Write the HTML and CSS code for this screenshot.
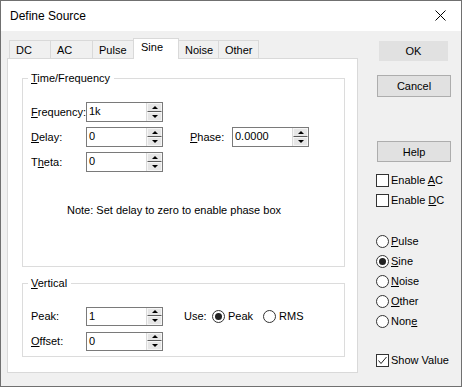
FILE: index.html
```html
<!DOCTYPE html>
<html lang="en">
<head>
  <meta charset="UTF-8" />
  <title>Define Source</title>
  <link rel="stylesheet" href="styles.css">
</head>
<body>
  <div class="window">
    <div class="titlebar">
      <span class="title">Define Source</span>
      <svg class="close" width="11" height="11" viewBox="0 0 11 11">
        <path d="M0.5 0.5 L10.5 10.5 M10.5 0.5 L0.5 10.5" stroke="#000" stroke-width="1" fill="none"/>
      </svg>
    </div>
    <div class="dialog">
      <div class="left">
        <div class="tabs">
          <div class="tab" style="width:42px">DC</div>
          <div class="tab" style="width:43px">AC</div>
          <div class="tab" style="width:42px">Pulse</div>
          <div class="tab selected" style="width:46px">Sine</div>
          <div class="tab" style="width:41px">Noise</div>
          <div class="tab" style="width:41px">Other</div>
        </div>
        <div class="panel">
          <fieldset class="group timefreq">
            <legend><u>T</u>ime/Frequency</legend>
            <div class="rows">
              <div class="row">
                <label class="lbl"><u>F</u>requency:</label>
                <div class="spin"><span class="val">1k</span><div class="arrows"><i class="up"></i><i class="down"></i></div></div>
              </div>
              <div class="row">
                <label class="lbl"><u>D</u>elay:</label>
                <div class="spin"><span class="val">0</span><div class="arrows"><i class="up"></i><i class="down"></i></div></div>
                <label class="lbl phase-lbl"><u>P</u>hase:</label>
                <div class="spin"><span class="val">0.0000</span><div class="arrows"><i class="up"></i><i class="down"></i></div></div>
              </div>
              <div class="row">
                <label class="lbl">T<u>h</u>eta:</label>
                <div class="spin"><span class="val">0</span><div class="arrows"><i class="up"></i><i class="down"></i></div></div>
              </div>
            </div>
            <p class="note">Note: Set delay to zero to enable phase box</p>
          </fieldset>
          <fieldset class="group vertical">
            <legend><u>V</u>ertical</legend>
            <div class="rows">
              <div class="row">
                <label class="lbl">Peak:</label>
                <div class="spin"><span class="val">1</span><div class="arrows"><i class="up"></i><i class="down"></i></div></div>
                <span class="use-lbl">Use:</span>
                <span class="opt"><i class="radio on"></i><span>Peak</span></span>
                <span class="opt rms"><i class="radio"></i><span>RMS</span></span>
              </div>
              <div class="row">
                <label class="lbl"><u>O</u>ffset:</label>
                <div class="spin"><span class="val">0</span><div class="arrows"><i class="up"></i><i class="down"></i></div></div>
              </div>
            </div>
          </fieldset>
        </div>
      </div>
      <div class="side">
        <button class="btn ok">OK</button>
        <button class="btn cancel">Cancel</button>
        <button class="btn help">Help</button>
        <div class="check first"><i class="box"></i><span>Enable <u>A</u>C</span></div>
        <div class="check"><i class="box"></i><span>Enable <u>D</u>C</span></div>
        <div class="check radios-start"><i class="radio"></i><span><u>P</u>ulse</span></div>
        <div class="check"><i class="radio on"></i><span><u>S</u>ine</span></div>
        <div class="check"><i class="radio"></i><span><u>N</u>oise</span></div>
        <div class="check"><i class="radio"></i><span><u>O</u>ther</span></div>
        <div class="check"><i class="radio"></i><span>Non<u>e</u></span></div>
        <div class="check show"><i class="box">
          <svg width="11" height="11" viewBox="0 0 11 11"><path d="M1.5 5.5 L4 8.5 L9.5 2" stroke="#222" stroke-width="1" fill="none"/></svg>
        </i><span>Show Value</span></div>
      </div>
    </div>
  </div>
</body>
</html>
```

FILE: styles.css
```css
* {
  box-sizing: border-box;
}

body {
  margin: 0;
  font-family: "Liberation Sans", Arial, sans-serif;
  font-size: 11px;
  color: #000;
  background: #fff;
}

u {
  text-decoration: underline;
  text-underline-offset: 1px;
}

.window {
  width: 462px;
  height: 387px;
  border: 1px solid #707070;
  background: #f0f0f0;
  display: flex;
  flex-direction: column;
}

.titlebar {
  height: 30px;
  background: #fff;
  display: flex;
  align-items: center;
  justify-content: space-between;
  padding: 0 10px 1px 9px;
}

.title {
  font-size: 12px;
}

.close {
  margin-right: 5px;
}

.dialog {
  flex: 1;
  display: flex;
}

.left {
  width: 351px;
  margin-left: 6px;
  padding-top: 7px;
}

.tabs {
  height: 20px;
  display: flex;
  align-items: flex-end;
  padding-left: 2px;
}

.tab {
  height: 18px;
  border: 1px solid #d9d9d9;
  border-bottom: none;
  margin-left: -1px;
  padding: 2px 0 0 6px;
  line-height: 14px;
  background: #f0f0f0;
}

.tab:first-child {
  margin-left: 0;
}

.tab.selected {
  height: 21px;
  margin-bottom: -1px;
  padding: 1px 0 0 7px;
  background: #fff;
  position: relative;
  z-index: 1;
}

.panel {
  height: 315px;
  border: 1px solid #d9d9d9;
  background: #fff;
  padding: 13px 12px 0 14px;
}

.group {
  margin: 0;
  padding: 0 0 0 8px;
  border: 1px solid #dcdcdc;
  min-width: 0;
}

.group legend {
  padding: 0 4px 0 3px;
  margin-left: -3px;
  line-height: 13px;
}

.timefreq {
  height: 195px;
}

.vertical {
  height: 80px;
  margin-top: 10px;
}

.rows {
  display: flex;
  flex-direction: column;
  gap: 5px;
  padding-top: 17px;
}

.vertical .rows {
  padding-top: 16px;
}

.row {
  display: flex;
  align-items: center;
  height: 20px;
}

.lbl {
  width: 55px;
}

.phase-lbl {
  width: 42px;
  margin-left: 27px;
}

.spin {
  width: 77px;
  height: 20px;
  border: 1px solid #7a7a7a;
  display: flex;
  background: #fff;
}

.vertical .spin {
  height: 19px;
}

.val {
  flex: 1;
  padding-left: 2px;
  line-height: 17px;
}

.arrows {
  width: 16px;
  display: flex;
  flex-direction: column;
  border-left: 1px solid #dadada;
  background: #f0f0f0;
}

.arrows i {
  flex: 1;
  display: flex;
  align-items: center;
  justify-content: center;
  background: #e6e6e6;
  border: 1px solid #f6f6f6;
}

.arrows i.up {
  border-bottom: 1px solid #5a5a5a;
}

.arrows i::before {
  content: "";
  border-left: 3px solid transparent;
  border-right: 3px solid transparent;
}

.arrows i.up::before {
  border-bottom: 3px solid #000;
}

.arrows i.down::before {
  border-top: 3px solid #000;
}

.note {
  margin: 32px 0 0 36px;
  line-height: 13px;
}

.use-lbl {
  margin-left: 21px;
  width: 28px;
}

.opt {
  display: flex;
  align-items: center;
}

.opt .radio {
  margin-right: 3px;
}

.rms {
  margin-left: 10px;
}

.radio {
  width: 13px;
  height: 13px;
  border: 1px solid #333;
  border-radius: 50%;
  background: #fff;
  display: inline-flex;
  align-items: center;
  justify-content: center;
}

.radio.on::before {
  content: "";
  width: 7px;
  height: 7px;
  border-radius: 50%;
  background: #222;
}

.side {
  width: 75px;
  margin-left: 18px;
  padding-top: 10px;
  display: flex;
  flex-direction: column;
}

.btn {
  font-family: inherit;
  font-size: 11px;
  color: #000;
  background: #e1e1e1;
  border: 1px solid #adadad;
  padding: 0;
}

.ok {
  width: 69px;
  height: 20px;
  margin-left: 3px;
  border-color: #e1e1e1;
}

.cancel {
  width: 74px;
  height: 22px;
  margin-left: 1px;
  margin-top: 14px;
}

.help {
  width: 74px;
  height: 21px;
  margin-left: 1px;
  margin-top: 44px;
}

.check {
  height: 20px;
  display: flex;
  align-items: center;
}

.check .box,
.check .radio {
  margin-right: 2px;
}

.box {
  width: 13px;
  height: 13px;
  border: 1px solid #333;
  background: #fff;
  display: inline-flex;
}

.check.first {
  margin-top: 8px;
}

.radios-start {
  margin-top: 21px;
}

.show {
  margin-top: 19px;
}
```
